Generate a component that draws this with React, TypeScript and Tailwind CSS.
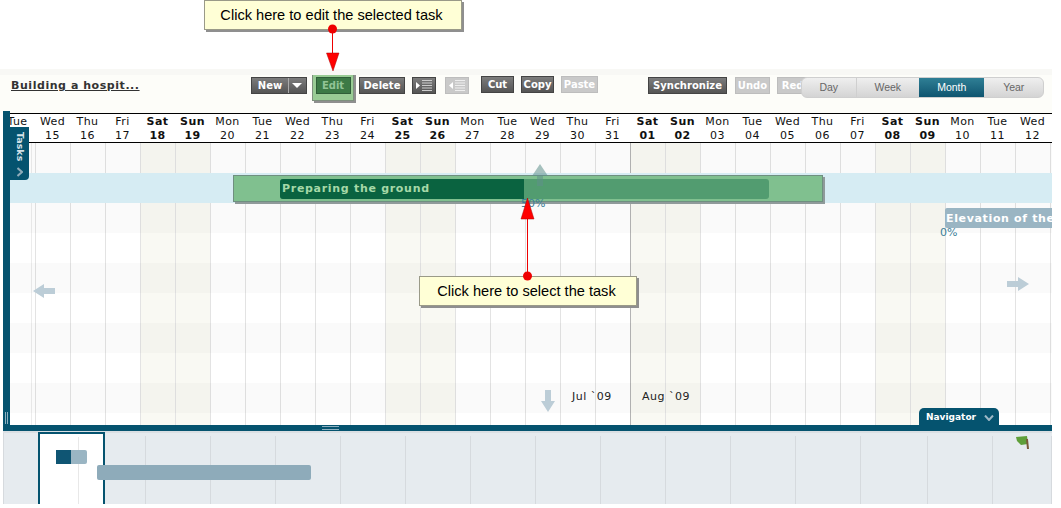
const days = [
  ["Tue", "14"], ["Wed", "15"], ["Thu", "16"], ["Fri", "17"], ["Sat", "18"], ["Sun", "19"], ["Mon", "20"],
  ["Tue", "21"], ["Wed", "22"], ["Thu", "23"], ["Fri", "24"], ["Sat", "25"], ["Sun", "26"], ["Mon", "27"],
  ["Tue", "28"], ["Wed", "29"], ["Thu", "30"], ["Fri", "31"], ["Sat", "01"], ["Sun", "02"], ["Mon", "03"],
  ["Tue", "04"], ["Wed", "05"], ["Thu", "06"], ["Fri", "07"], ["Sat", "08"], ["Sun", "09"], ["Mon", "10"],
  ["Tue", "11"], ["Wed", "12"], ["", ""],
];

const rowColors = [
  "bg-black/[0.018]", "bg-[#d6ecf3]", "bg-black/[0.018]", "", "bg-black/[0.018]", "", "bg-black/[0.018]", "", "bg-black/[0.018]", "",
];

const navLines = [75, 142, 207, 272, 337, 402, 467, 532, 597, 662, 727, 792, 857, 924, 989, 1048];

function ToolButton({ label, light, className }: { label: string; light?: boolean; className: string }) {
  return (
    <div
      className={`flex h-[17px] shrink-0 items-center justify-center border text-[10px] font-bold text-white ${
        light
          ? "border-[#bdbdbd] bg-[#c9c9c9]"
          : "border-[#444] bg-gradient-to-b from-[#7c7c7c] to-[#555]"
      } ${className}`}
    >
      {label}
    </div>
  );
}

function IndentIcon({ out, light }: { out?: boolean; light?: boolean }) {
  return (
    <svg width="16" height="13" viewBox="0 0 16 13">
      <path d={out ? "M4 3L0 6.5L4 10Z" : "M0 3L4 6.5L0 10Z"} fill="#fff" />
      <path d="M6 1.5H16M6 4H16M6 6.5H16M6 9H16M6 11.5H16" stroke={light ? "#eee" : "#ccc"} strokeWidth="1" />
    </svg>
  );
}

function Callout({ text, className }: { text: string; className: string }) {
  return (
    <div
      className={`absolute flex h-[30px] items-center justify-center border border-[#9a9a88] bg-[#ffffd6] pr-[3px] pt-[2px] text-[14.6px] text-black shadow-[2px_2px_0_#8f8f8f] [font-family:'Liberation_Sans',sans-serif] ${className}`}
    >
      {text}
    </div>
  );
}

export default function App() {
  return (
    <div className="relative h-[508px] w-[1061px] overflow-hidden bg-white [font-family:'DejaVu_Sans',sans-serif]">
      <div className="h-[69px]" />

      {/* toolbar */}
      <div className="flex h-[44px] w-[1052px] items-start overflow-hidden border-t-[6px] border-[#f8f8f5] bg-[#fdfdf9] pl-[11px]">
        <a className="mt-[3px] w-[240px] shrink-0 text-[11px] font-bold tracking-[0.55px] text-[#333] underline">
          Building a hospit...
        </a>
        <div className="mt-[2px] flex h-[17px] w-[56px] shrink-0 items-center border border-[#444] bg-gradient-to-b from-[#7c7c7c] to-[#555] text-[10px] font-bold text-white">
          <span className="w-[37px] border-r border-[#aaa] text-center">New</span>
          <svg width="10" height="5" viewBox="0 0 10 5" className="ml-[3px]">
            <path d="M0 0H10L5 5Z" fill="#fff" />
          </svg>
        </div>
        <div className="z-10 -mt-[6px] ml-[5px] flex h-[32px] w-[42px] shrink-0 items-start justify-center border border-[#7d907d] bg-[#99cc95] pt-[7px] shadow-[2px_2px_0_#8f8f8f]">
          <div className="flex h-[17px] w-[35px] items-center justify-center border border-[#2f5f38] bg-[#3c7a46] text-[10px] font-semibold text-[#92c496]">
            Edit
          </div>
        </div>
        <ToolButton label="Delete" className="ml-[5px] mt-[2px] w-[46px]" />
        <div className="ml-[7px] mt-[2px] flex h-[17px] w-[24px] shrink-0 items-center justify-center border border-[#444] bg-gradient-to-b from-[#7c7c7c] to-[#555]">
          <IndentIcon />
        </div>
        <div className="ml-[9px] mt-[2px] flex h-[17px] w-[24px] shrink-0 items-center justify-center border border-[#bdbdbd] bg-[#c9c9c9]">
          <IndentIcon out light />
        </div>
        <ToolButton label="Cut" className="ml-[12px] mt-[1px] w-[33px]" />
        <ToolButton label="Copy" className="ml-[7px] mt-[1px] w-[33px]" />
        <ToolButton label="Paste" light className="ml-[7px] mt-[1px] w-[37px]" />
        <ToolButton label="Synchronize" className="ml-[50px] mt-[2px] w-[79px] text-[9.5px]" />
        <ToolButton label="Undo" light className="ml-[8px] mt-[2px] w-[35px]" />
        <ToolButton label="Redo" light className="ml-[7px] mt-[2px] w-[38px]" />
      </div>

      {/* Day / Week / Month / Year */}
      <div className="absolute left-[801px] top-[77px] flex h-[21px] w-[243px] overflow-hidden rounded-[6px] border border-[#cfcfcf] bg-gradient-to-b from-[#efefef] to-[#d4d4d4] text-[10.5px] text-[#666] [font-family:'Liberation_Sans',sans-serif]">
        <div className="flex w-[55px] items-center justify-center border-r border-[#cfcfcf]">Day</div>
        <div className="flex w-[63px] items-center justify-center">Week</div>
        <div className="flex w-[66px] items-center justify-center bg-gradient-to-b from-[#2f7f95] to-[#0e5570] text-white">Month</div>
        <div className="flex w-[59px] items-center justify-center">Year</div>
      </div>

      {/* chart */}
      <div className="ml-[3px] flex h-[312px] w-[1049px]">
        <div className="relative -mt-[2px] w-[7px] shrink-0 bg-[#05536f]" />
        <div className="relative min-w-0 flex-1 overflow-hidden">
          <div className="flex h-[30px] items-center border-y border-black bg-white text-[11px] leading-[14px] tracking-[0.4px] text-[#111]">
            {days.map(([name, date], i) => (
              <div
                key={i}
                className={`flex h-[28px] shrink-0 flex-col justify-center pt-[2px] text-center ${
                  i === 0 ? "-ml-[10px] w-[35px]" : "w-[35px]"
                } ${name === "Sat" || name === "Sun" ? "font-bold" : ""}`}
              >
                <span>{name}</span>
                <span>{date}</span>
              </div>
            ))}
          </div>

          <div className="relative h-[282px]">
            <div className="absolute inset-0 flex">
              {days.map(([name, date], i) => (
                <div
                  key={i}
                  className={`h-full shrink-0 border-l ${
                    i === 0 ? "-ml-[10px] w-[35px] border-transparent" : "w-[35px]"
                  } ${date === "01" ? "border-[#b4b4b4]" : "border-[#e3e3e3]"} ${
                    name === "Sat" || name === "Sun" ? "bg-[#f9f9f3]" : ""
                  }`}
                />
              ))}
            </div>
            <div className="absolute bottom-0 left-[21px] top-0 w-px bg-[#ececec]" />
            <div className="relative flex h-full flex-col">
              {rowColors.map((color, i) => (
                <div key={i} className={`h-[30px] shrink-0 ${color}`} />
              ))}
            </div>

            {/* task bars */}
            <div className="absolute left-[223px] top-[32px] flex h-[27px] w-[590px] items-center border border-[#6f8f80] bg-[#80c08f] pl-[46px] shadow-[2px_2px_0_#8f9a9a]">
              <div className="flex h-[20px] w-[489px] overflow-hidden rounded-[3px] bg-[#529c70]">
                <div className="flex w-[244px] items-center bg-[#0a6340] pl-[2px] pt-[2px] text-[11px] font-bold tracking-[0.7px] text-[#a6d9a8]">
                  Preparing the ground
                </div>
              </div>
            </div>
            <div className="absolute left-[511px] top-[53px] text-[11px] text-[#3c7f99]">50%</div>
            <div className="absolute left-[935px] top-[65px] flex h-[20px] w-[107px] items-center overflow-hidden rounded-l-[2px] bg-[#9ab5c3] pl-[1px] pt-[2px] text-[11px] font-bold tracking-[0.65px] whitespace-nowrap text-white">
              Elevation of the
            </div>
            <div className="absolute left-[930px] top-[82px] text-[11px] text-[#3c7f99]">0%</div>

            {/* scroll arrows */}
            <svg width="16" height="22" viewBox="0 0 16 22" className="absolute left-[522px] top-[21px]">
              <path d="M8 0L16 12H11V22H5V12H0Z" fill="#5f8f8a" opacity="0.55" />
            </svg>
            <svg width="14" height="22" viewBox="0 0 14 22" className="absolute left-[531px] top-[247px]">
              <path d="M4 0H10V11H14L7 22L0 11H4Z" fill="#bccdd7" />
            </svg>
            <svg width="22" height="14" viewBox="0 0 22 14" className="absolute left-[23px] top-[141px]">
              <path d="M22 4V10H11V14L0 7L11 0V4Z" fill="#bccdd7" />
            </svg>
            <svg width="22" height="14" viewBox="0 0 22 14" className="absolute left-[997px] top-[134px]">
              <path d="M0 4V10H11V14L22 7L11 0V4Z" fill="#bccdd7" />
            </svg>

            <div className="absolute left-[562px] top-[246px] text-[11px] tracking-[0.5px] text-[#222]">Jul `09</div>
            <div className="absolute left-[632px] top-[246px] text-[11px] tracking-[0.5px] text-[#222]">Aug `09</div>

            <div className="absolute left-[909px] top-[265px] flex h-[17px] w-[80px] items-center gap-[8px] rounded-t-[5px] bg-[#05536f] pl-[7px] pt-[2px] text-[9px] font-bold text-white">
              Navigator
              <svg width="10" height="6" viewBox="0 0 10 6">
                <path d="M1 0.5L5 5L9 0.5" fill="none" stroke="#9db8c6" strokeWidth="2" />
              </svg>
            </div>
          </div>

          {/* tasks tab */}
          <div className="absolute left-0 top-[14px] flex h-[53px] w-[19px] flex-col items-center rounded-br-[4px] bg-[#05536f] pt-[5px]">
            <span className="text-[9.5px] leading-[18px] font-bold text-[#d5e2e8] [writing-mode:vertical-rl]">Tasks</span>
            <svg width="6" height="10" viewBox="0 0 6 10" className="mt-[6px]">
              <path d="M0.5 1L5 5L0.5 9" fill="none" stroke="#8fabb9" strokeWidth="2" />
            </svg>
          </div>
        </div>
      </div>

      {/* divider */}
      <div className="relative ml-[3px] h-[6px] w-[1049px] bg-[#05536f]">
        <div className="absolute left-[319px] top-[1px] h-[4px] w-[17px] border-y border-[#8fb0c0]" />
        <div className="absolute left-[2px] top-[-13px] h-[12px] w-[3px] border-x border-[#8fb0c0]" />
      </div>

      {/* navigator */}
      <div className="relative ml-[3px] h-[73px] w-[1049px] border-t-2 border-[#dadfe3] bg-[#e6ebef]">
        {navLines.map((x) => (
          <div key={x} className="absolute bottom-0 top-[3px] w-px bg-[#d6dade]" style={{ left: x }} />
        ))}
        <div className="absolute bottom-0 left-0 top-0 w-px bg-[#d6dade]" />
        <div className="absolute bottom-0 left-[35px] top-[-1px] w-[67px] border-x-2 border-t-2 border-[#05536f] bg-white">
          <div className="absolute bottom-0 left-[38px] top-[3px] w-px bg-[#e8e8e8]" />
        </div>
        <div className="absolute left-[53px] top-[17px] flex h-[14px] w-[31px] overflow-hidden rounded-r-[2px] bg-[#9ab5c3]">
          <div className="w-[15px] bg-[#0f5573]" />
        </div>
        <div className="absolute left-[94px] top-[32px] h-[15px] w-[214px] rounded-[2px] bg-[#8eabba]" />
        <svg width="13" height="13" viewBox="0 0 13 13" className="absolute left-[1013px] top-[3px]">
          <path d="M0 1L11 0L12 8L5 9L1 5Z" fill="#5f9f3a" />
          <path d="M11 3L12 13" stroke="#7a5a3a" strokeWidth="2" />
        </svg>
      </div>

      {/* callouts */}
      <Callout text="Click here to edit the selected task" className="left-[204px] top-0 w-[258px]" />
      <Callout text="Click here to select the task" className="left-[419px] top-[276px] w-[218px]" />
      <svg width="1061" height="508" viewBox="0 0 1061 508" className="pointer-events-none absolute left-0 top-0">
        <path d="M332.5 29V54" stroke="#e00" strokeWidth="1" />
        <circle cx="332.5" cy="29" r="4.5" fill="#e00" />
        <path d="M326.5 53H339L333 71Z" fill="#f00" stroke="#a00" strokeWidth="0.5" />
        <path d="M527.5 216V276" stroke="#e00" strokeWidth="1" />
        <circle cx="527.5" cy="276" r="4.5" fill="#e00" />
        <path d="M521 219H534L527.5 198Z" fill="#f00" stroke="#a00" strokeWidth="0.5" />
      </svg>
    </div>
  );
}
